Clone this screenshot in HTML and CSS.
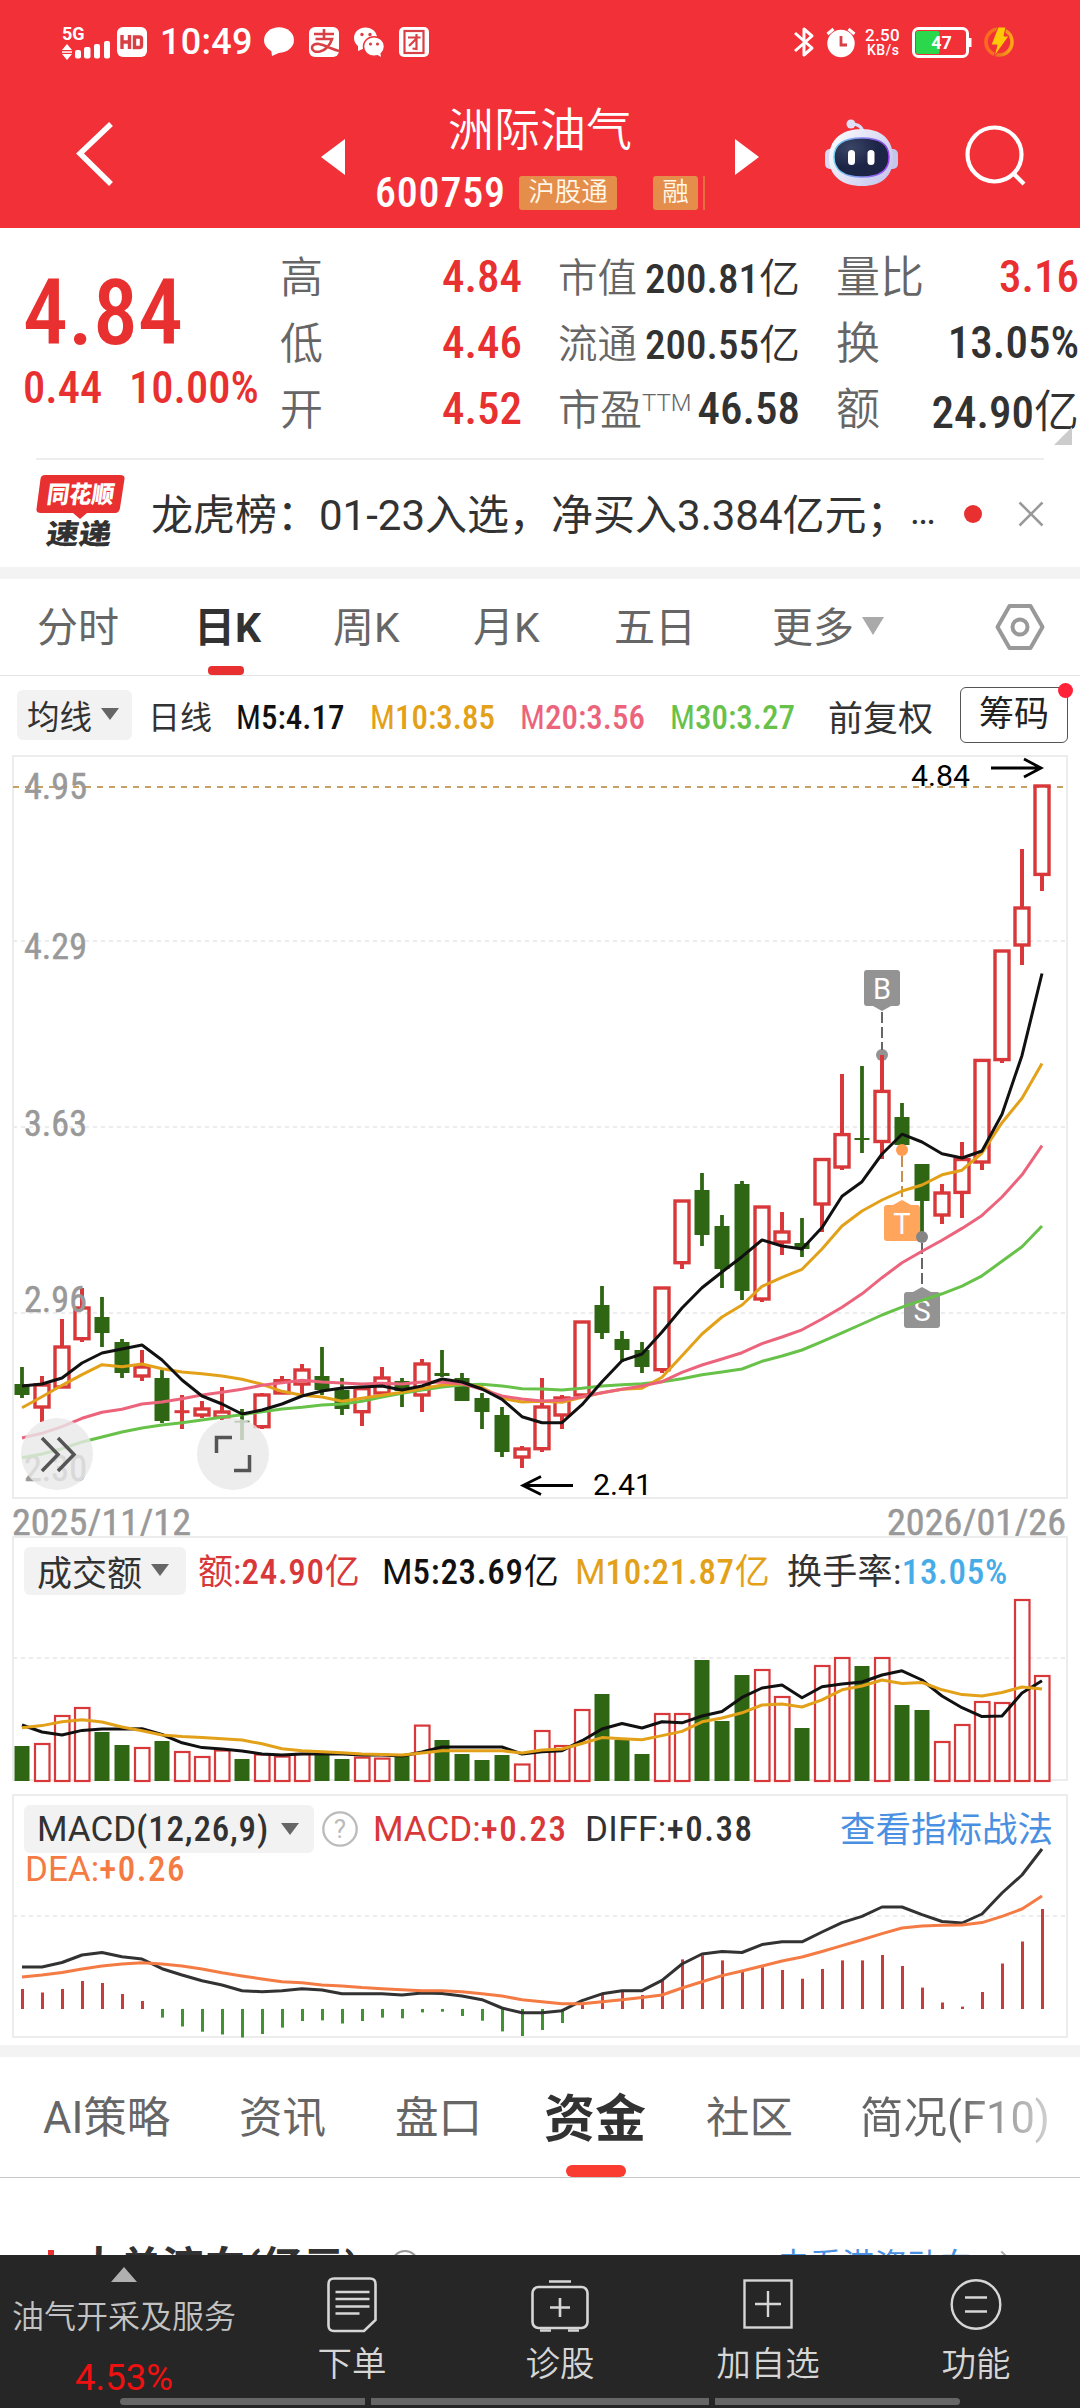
FILE: index.html
```html
<!DOCTYPE html>
<html lang="zh-CN">
<head>
<meta charset="utf-8">
<title>洲际油气 600759</title>
<link rel="stylesheet" href="styles.css">
</head>
<body>
<div class="app">
  <header class="top">
    <div class="status">
      <svg class="ic-signal" width="48" height="36" viewBox="0 0 48 36" fill="#fff">
        <text x="0" y="15" class="t5g">5G</text>
        <path d="M5 19l5 6H0zM5 35l5-6H0z"/><rect x="0" y="26.300" width="10" height="1.500"/>
        <rect x="13" y="25" width="6" height="8.500" rx="2"/><rect x="22" y="22" width="6.500" height="11.500" rx="2"/><rect x="32" y="19" width="6" height="14.500" rx="2"/><rect x="42" y="16" width="6" height="17.500" rx="2"/>
      </svg>
      <svg class="ic-hd" width="30" height="30" viewBox="0 0 30 30"><rect width="30" height="30" rx="6" fill="#fff"/><path d="M5 8v14M12.500 8v14M5 15h7.500M17.500 10h5a2 2 0 0 1 2 2v6.500a2 2 0 0 1-2 2h-5z" fill="none" stroke="#d94046" stroke-width="3.400"/></svg>
      <span class="clock">10:49</span>
      <svg class="ic-s" width="30" height="30" viewBox="0 0 30 30"><ellipse cx="15" cy="13" rx="15" ry="12.800" fill="#fff"/><path d="M7 22l1 7 9-4z" fill="#fff"/></svg>
      <svg class="ic-s" width="30" height="30" viewBox="0 0 30 30"><rect width="30" height="30" rx="6" fill="#fff"/><path d="M5 7h20M15 2v10M6.500 12h16.500c-2 6-6 11-12 12.500-5 1-8-1-8-3.500 0-3 3-4.500 7-4 6 1 12 5 20 7" fill="none" stroke="#d94046" stroke-width="2.600"/></svg>
      <svg class="ic-s" width="30" height="30" viewBox="0 0 30 30"><ellipse cx="11.500" cy="11" rx="11.500" ry="10.500" fill="#fff"/><path d="M4 18l0 6 7-3z" fill="#fff"/><ellipse cx="20" cy="19.500" rx="10.500" ry="9.800" fill="#fff" stroke="#f13038" stroke-width="1.500"/><path d="M22 27l5 3-1-6z" fill="#fff"/><g fill="#d94046"><circle cx="8" cy="7.500" r="1.700"/><circle cx="16" cy="7.500" r="1.700"/><circle cx="16.500" cy="17" r="1.600"/><circle cx="23.500" cy="17" r="1.600"/></g></svg>
      <svg class="ic-s" width="30" height="30" viewBox="0 0 30 30"><rect width="30" height="30" rx="5" fill="#fff"/><rect x="5.500" y="4" width="19" height="22" fill="none" stroke="#d94046" stroke-width="2.200"/><path d="M9 10.500h12.500M17.500 7v15l-4-.5M17 12l-7 7" fill="none" stroke="#d94046" stroke-width="2.200"/></svg>
      <svg class="ic-bt" width="20" height="30" viewBox="0 0 20 30"><path d="M1 6l17 15-8 7V2l8 7L1 24" fill="none" stroke="#fff" stroke-width="3" stroke-linejoin="round"/></svg>
      <svg class="ic-alarm" width="30" height="30" viewBox="0 0 30 30"><circle cx="15" cy="16.500" r="13.700" fill="#fff"/><path d="M1.500 7l6-5M28.500 7l-6-5" stroke="#fff" stroke-width="3"/><path d="M15 9v9h6" fill="none" stroke="#d94046" stroke-width="2.800"/></svg>
      <div class="speed"><b>2.50</b><i>KB/s</i></div>
      <svg class="ic-batt" width="60" height="31" viewBox="0 0 60 31"><rect x="1.500" y="1.500" width="54" height="28" rx="5" fill="none" stroke="#fff" stroke-width="3"/><rect x="4" y="4" width="23.500" height="23" rx="2" fill="#2bd84c"/><rect x="57" y="11" width="2.500" height="9" fill="#fff"/><text x="29.500" y="22" text-anchor="middle" class="tb">47</text></svg>
      <svg class="ic-bolt" width="30" height="30" viewBox="0 0 30 30"><defs><linearGradient id="ring" x1="0" x2="1"><stop offset="0" stop-color="#ff6a1e"/><stop offset=".5" stop-color="#e8781c"/><stop offset="1" stop-color="#ffa617"/></linearGradient></defs><circle cx="15" cy="15" r="13" fill="none" stroke="url(#ring)" stroke-width="3.600"/><path d="M14 0h8l-2 9h5L10 30l3-12H7z" fill="#ffca05" stroke="#f13038" stroke-width="1"/></svg>
    </div>
    <div class="nav">
      <svg class="n-back" width="40" height="66" viewBox="0 0 40 66"><path d="M37 3L6 32.500 37 63" fill="none" stroke="#fff" stroke-width="5.500"/></svg>
      <svg class="n-prev" width="24" height="36" viewBox="0 0 24 36"><path d="M24 0v36L0 18z" fill="#fff"/></svg>
      <div class="stock">
        <div class="name">洲际油气</div>
        <div class="code-row"><span class="code">600759</span><span class="tag">沪股通</span><span class="tag tag2">融</span><span class="sliver"></span></div>
      </div>
      <svg class="n-next" width="24" height="36" viewBox="0 0 24 36"><path d="M0 0v36l24-18z" fill="#fff"/></svg>
      <svg class="n-bot" width="74" height="70" viewBox="0 0 74 70">
        <defs><linearGradient id="shell" x1="0" x2="1" y1="0" y2=".6"><stop offset="0" stop-color="#fff"/><stop offset="1" stop-color="#c9caee"/></linearGradient><radialGradient id="visor" cx=".3" cy=".25"><stop offset="0" stop-color="#3a4566"/><stop offset="1" stop-color="#1d2547"/></radialGradient><linearGradient id="rim" x1="0" x2="1"><stop offset="0" stop-color="#6ed3f0"/><stop offset="1" stop-color="#9b40ee"/></linearGradient></defs>
        <path d="M26 5q12 0 12 10" fill="none" stroke="#dcdcf5" stroke-width="3"/><circle cx="26" cy="5" r="4.500" fill="#dfe0f7"/>
        <rect x="0" y="30" width="12" height="20" rx="5" fill="#d9d9f2"/><rect x="61" y="30" width="12" height="20" rx="5" fill="#c5c6ec"/>
        <path d="M37 10c20 0 31 11 31 29S57 67 37 67 4 57 4 39 16 10 37 10z" fill="url(#shell)"/>
        <path d="M37 19c18 0 27 6 27 19s-9 20-27 20S9 51 9 38s10-19 28-19z" fill="url(#visor)" stroke="url(#rim)" stroke-width="1.500"/>
        <rect x="23" y="31" width="7" height="15" rx="3.500" fill="#fff"/><rect x="42.500" y="31" width="7" height="15" rx="3.500" fill="#fff"/>
      </svg>
      <svg class="n-search" width="62" height="62" viewBox="0 0 62 62" fill="none" stroke="#fff" stroke-width="4.200"><circle cx="29.500" cy="29.500" r="27"/><path d="M48 48l11 11"/></svg>
    </div>
  </header>

  <section class="quote">
    <div class="price">
      <div class="last din">4.84</div>
      <div class="chg din"><span>0.44</span><span>10.00%</span></div>
    </div>
    <dl class="kv k1"><dt>高</dt><dd class="din up">4.84</dd><dt>低</dt><dd class="din up">4.46</dd><dt>开</dt><dd class="din up">4.52</dd></dl>
    <dl class="kv k2"><dt>市值</dt><dd class="din sm">200.81<em>亿</em></dd><dt>流通</dt><dd class="din sm">200.55<em>亿</em></dd><dt class="wide">市盈<sup>TTM</sup></dt><dd class="din">46.58</dd></dl>
    <dl class="kv k3"><dt>量比</dt><dd class="din up">3.16</dd><dt>换</dt><dd class="din">13.05%</dd><dt>额</dt><dd class="din">24.90<em>亿</em></dd></dl>
    <span class="corner"></span>
  </section>

  <section class="news">
    <svg class="logo" width="90" height="76" viewBox="0 0 90 76"><path d="M9 0h75q5 0 4.500 4L84 33q-.7 5-5 5H51l-7 6-7-6H5q-5 0-4.500-4L4.500 4Q5 0 9 0z" fill="#e83030"/><g transform="skewX(-8)"><text x="14" y="28.500" class="lg1" textLength="67" lengthAdjust="spacingAndGlyphs">同花顺</text><text x="19" y="69.500" class="lg2" textLength="65" lengthAdjust="spacingAndGlyphs">速递</text></g></svg>
    <span class="news-t">龙虎榜：01-23入选，净买入3.384亿元；</span><span class="ell">...</span>
    <span class="dot"></span>
    <svg width="26" height="26" viewBox="0 0 26 26" fill="none" stroke="#999" stroke-width="2.500"><path d="M1.500 1.500l23 23M24.500 1.500l-23 23"/></svg>
  </section>

  <nav class="period">
    <span>分时</span><span class="on">日K</span><span>周K</span><span>月K</span><span>五日</span><span class="more">更多<i class="tri big"></i></span>
    <svg width="50" height="46" viewBox="0 0 50 46" fill="none" stroke="#999" stroke-width="4"><path d="M14.500 2h21L47.500 23l-12 21h-21L2.500 23z" stroke-linejoin="round"/><circle cx="25" cy="23" r="7.500"/></svg>
  </nav>

  <div class="ma">
    <span class="chip">均线<i class="tri"></i></span><span class="day">日线</span>
    <span class="m m5"><u>M</u>5:4.17</span><span class="m m10"><u>M</u>10:3.85</span><span class="m m20"><u>M</u>20:3.56</span><span class="m m30"><u>M</u>30:3.27</span>
    <span class="fq">前复权</span><span class="cm">筹码</span>
  </div>

  <section class="kline panel"><svg id="kline" width="1080" height="781" viewBox="0 755 1080 781"></svg></section>

  <section class="panel vol">
    <svg id="volume" width="1080" height="258" viewBox="0 1536 1080 258"></svg>
    <div class="legend"><span class="chip">成交额<i class="tri"></i></span><span class="l v1">额:<b>24.90</b>亿</span><span class="l v2">M<b>5:23.69</b>亿</span><span class="l v3">M<b>10:21.87</b>亿</span><span class="l v4">换手率:<b class="blue">13.05%</b></span></div>
  </section>

  <section class="panel macd">
    <svg id="macd" width="1080" height="251" viewBox="0 1794 1080 251"></svg>
    <div class="legend-wrap">
      <div class="legend"><span class="chip">MACD<b>(12,26,9)</b><i class="tri"></i></span>
        <svg class="q" width="36" height="36" viewBox="0 0 36 36"><circle cx="18" cy="18" r="16.700" fill="none" stroke="#bbb" stroke-width="2.300"/><text x="18" y="27" text-anchor="middle" class="qm">?</text></svg>
        <span class="c1">MACD:<b>+0.23</b></span><span class="c2">DIFF:<b>+0.38</b></span><a class="how">查看指标战法</a></div>
      <div class="dea">DEA:<b>+0.26</b></div>
    </div>
  </section>

  <nav class="tabs"><span>AI策略</span><span>资讯</span><span>盘口</span><span class="on">资金</span><span>社区</span><span class="fade">简况(F10)</span></nav>
  <section class="flow"><i class="bar"></i><h2>大单流向(亿元)</h2><i class="ring"></i><a>去看港资动向</a><i class="chev"></i></section>

  <footer class="foot">
    <div class="items">
      <div class="sector"><i class="up-tri"></i><span>油气开采及服务</span><b>4.53%</b></div>
      <div class="act"><svg width="50" height="56" viewBox="0 0 50 56" fill="none" stroke="#d6d6d6" stroke-width="2.600"><path d="M7 1.500h36q5.500 0 5.500 5.500v36L37 54H7q-5.500 0-5.500-5.500V7Q1.500 1.500 7 1.500z"/><path d="M8.500 15h34M8.500 22h34M8.500 29.500h34M8.500 36.500h24"/></svg><span>下单</span></div>
      <div class="act"><svg width="58" height="56" viewBox="0 0 58 56" fill="none" stroke="#d6d6d6" stroke-width="2.600"><rect x="1.500" y="10" width="55" height="41" rx="6"/><path d="M18 4.500h22M29 21v19M19 30.500h20M9 53.500h11M37 53.500h11"/></svg><span>诊股</span></div>
      <div class="act"><svg width="50" height="56" viewBox="0 0 50 56" fill="none" stroke="#d6d6d6" stroke-width="2.400"><rect x="1.500" y="3.500" width="47" height="47"/><path d="M25 14v26M12 27h26"/></svg><span>加自选</span></div>
      <div class="act"><svg width="52" height="56" viewBox="0 0 52 56" fill="none" stroke="#d6d6d6" stroke-width="2.400"><circle cx="26" cy="27.500" r="24.300"/><path d="M15 20.500h22M15 34.500h22"/></svg><span>功能</span></div>
    </div>
    <div class="home"><i></i><i></i><i></i></div>
  </footer>
</div>
<script src="charts.js"></script>
</body>
</html>
```
FILE: styles.css
```css
* { box-sizing: border-box; }
body { margin: 0; background: #fff; font-family: Roboto, "Noto Sans CJK SC", sans-serif; color: #323232; }
i, em { font-style: normal; }
u { text-decoration: none; }
svg { display: block; flex: none; overflow: visible; }
span, a { white-space: nowrap; }
.app { width: 1080px; height: 2408px; overflow: hidden; display: flex; flex-direction: column; }
.app > * { flex: none; }
.din { font-family: "Roboto Condensed", Roboto, "Noto Sans CJK SC", sans-serif; font-weight: 500; }

.top { background: #f13038; height: 228px; color: #fff; }
.status { height: 84px; display: flex; align-items: flex-start; padding: 27px 0 0 62px; }
.ic-signal { margin: -2px 7px 0 0; }
.t5g { font: 700 18px Roboto; }
.clock { font: 500 36px/30px Roboto; width: 103px; padding-left: 13px; letter-spacing: .3px; }
.clock + .ic-s { margin-left: 14px; }
.ic-s { margin-right: 15px; }
.ic-bt { margin-left: 350px; }
.ic-alarm { margin-left: 12px; }
.speed { width: 56px; padding: 1px 0 0 9px; display: flex; flex-direction: column; gap: 1px; }
.speed b { font-weight: 500; font-size: 17px; line-height: 14px; letter-spacing: .3px; }
.speed i { font-weight: 500; font-size: 14px; line-height: 14px; padding-left: 2px; letter-spacing: .5px; }
.ic-batt { margin: 0; }
.tb { font: 700 18px Roboto; fill: #fff; }
.ic-bolt { margin-left: 12px; }
.nav { height: 144px; display: flex; align-items: flex-start; }
.n-back { margin: 37px 0 0 74px; }
.n-prev { margin: 55px 0 0 207px; }
.stock { width: 390px; padding: 18px 0 0 30px; }
.name { width: 330px; text-align: center; font-size: 46px; line-height: 56px; font-weight: 350; }
.code-row { display: flex; align-items: center; margin-top: 16px; height: 38px; }
.code { font: 500 42px/38px "Roboto Condensed", Roboto; width: 144px; letter-spacing: .8px; }
.tag { background: #e58e4c; color: #fff7e8; width: 98px; height: 34px; border-radius: 3px; font-size: 26.500px; line-height: 32px; text-align: center; font-weight: 350; }
.tag2 { width: 45px; margin-left: 36px; }
.sliver { width: 2px; height: 34px; background: #e5713f; margin-left: 5px; }
.n-next { margin: 55px 0 0 0; }
.n-bot { margin: 35px 0 0 66px; }
.n-search { margin: 41px 0 0 66px; }

.quote { height: 230px; display: flex; position: relative; }
.price { width: 280px; padding-left: 23px; color: #e83030; }
.last { font-size: 90px; line-height: 80px; margin-top: 46px; }
.chg { display: flex; font-size: 44.500px; line-height: 50px; margin-top: 9px; }
.chg span:first-child { width: 106px; }
.kv { margin: 15px 0 0; display: grid; grid-template-columns: 80px 1fr; grid-auto-rows: 66px; align-items: center; color: #666; }
.kv dt { font-size: 43px; font-weight: 350; white-space: nowrap; padding-bottom: 4px; }
.kv dd { margin: 0; text-align: right; font-size: 45px; color: #323232; white-space: nowrap; }
.kv dd.up { color: #e83030; }
.kv dd.sm { font-size: 41px; padding-bottom: 2px; }
.kv em { font-weight: 350; }
.k1 { width: 242px; }
.k2 { width: 242px; margin-left: 36px; }
.k2 dt { font-size: 39.500px; }
.k2 dt.wide { font-size: 42px; }
.k2 sup { font-size: 24px; line-height: 0; vertical-align: 14px; }
.k3 { width: 243px; margin-left: 36px; }
.k3 dt { font-size: 44px; }
.corner { position: absolute; left: 1054px; top: 199px; border-left: 18px solid transparent; border-bottom: 18px solid #ccc; }

.news { height: 109px; margin: 0 36px; border-top: 2px solid #ededed; display: flex; align-items: center; }
.logo { margin-top: -1px; }
.lg1 { font: 900 24px "Noto Sans CJK SC"; fill: #fff; }
.lg2 { font: 900 28px "Noto Sans CJK SC"; fill: #323232; }
.news-t { font-size: 42px; margin-left: 25px; width: 761px; padding-bottom: 5px; }
.ell { font-size: 38px; width: 28px; letter-spacing: -2px; padding-bottom: 5px; }
.dot { width: 18px; height: 18px; border-radius: 9px; background: #e83030; margin-left: 26px; }
.news > .dot + svg { margin-left: 36px; }

.period { height: 109px; border-top: 12px solid #f3f3f3; border-bottom: 1px solid #e4e4e4; display: flex; align-items: center; padding-left: 37px; font-size: 41px; color: #666; font-weight: 400; }
.period span { padding-bottom: 6px; }
.period span:nth-child(1) { width: 157px; }
.period span:nth-child(2) { width: 139px; }
.period span:nth-child(3) { width: 140px; }
.period span:nth-child(4) { width: 141px; }
.period span:nth-child(5) { width: 158px; }
.period .on { font-weight: 700; color: #323232; align-self: stretch; display: flex; align-items: center; position: relative; }
.period .on::after { content: ""; position: absolute; left: 14px; bottom: 0; width: 36px; height: 9px; border-radius: 4px; background: #e83030; }
.more { display: flex; align-items: center; width: 223px; }
.tri { display: inline-block; border: 9px solid transparent; border-top: 12px solid #666; border-bottom: 0; }
.tri.big { border-width: 18px 11px 0; border-top-color: #aaa; margin: 4px 0 0 8px; }

.ma { height: 79px; display: flex; align-items: center; padding: 0 0 1px 17px; font-size: 33px; }
.chip { background: #f2f2f2; border-radius: 6px; display: flex; align-items: center; color: #323232; }
.ma .chip { width: 115px; height: 50px; padding: 0 0 2px 10px; font-size: 32.500px; gap: 9px; }
.day { margin-left: 16px; width: 88px; font-size: 32px; }
.m { font: 500 33px "Roboto Condensed", Roboto; padding-top: 4px; }
.m u { font-weight: 400; }
.m5 { width: 134px; color: #111; }
.m10 { width: 150px; color: #e3a11a; }
.m20 { width: 150px; color: #ec647c; }
.m30 { width: 158px; color: #68c24a; }
.fq { width: 132px; font-size: 35px; }
.cm { width: 108px; height: 56px; border: 1.500px solid #555; border-radius: 6px; text-align: center; font-size: 35px; line-height: 54px; position: relative; color: #222; }
.cm::after { content: ""; position: absolute; right: -6px; top: -5px; width: 15px; height: 15px; border-radius: 8px; background: #ff2238; }

.panel { display: grid; }
.panel > * { grid-area: 1 / 1; }
.kline { height: 781px; }
.vol { height: 258px; }
.macd { height: 251px; }
.legend { display: flex; align-items: center; height: 48px; margin: 11px 0 0 24px; font-size: 35px; }
.legend b, .dea b { font-family: "Roboto Condensed", Roboto; font-weight: 500; letter-spacing: .7px; }
.legend .chip { height: 48px; padding: 0 0 2px 13px; gap: 9px; width: 162px; }
.l { padding-bottom: 5px; }
.v1 { margin-left: 12px; width: 184px; color: #d9383a; }
.v2 { width: 193px; color: #111; }
.v3 { width: 212px; color: #e3a11a; }
.v4 { letter-spacing: .3px; }
.blue { color: #46ace8; }
.macd .chip { width: 290px; gap: 0; padding-bottom: 0; }
.macd .chip .tri { margin-left: 12px; }
.macd .chip b { letter-spacing: .8px; }
.q { margin: 0 15px 0 8px; }
.qm { font: 400 26px Roboto; fill: #bbb; }
.c1 { width: 212px; color: #d9383a; }
.c2 { width: 255px; }
.c1 b, .c2 b, .dea b { letter-spacing: 1.500px; }
.c2 { letter-spacing: .4px; }
.how { color: #4a90e2; font-size: 35.500px; padding-bottom: 6px; }
.dea { margin-left: 25px; font-size: 35px; line-height: 34px; color: #f47b43; }

.tabs { height: 133px; border-top: 12px solid #f3f3f3; border-bottom: 1.500px solid #c8c8c8; display: flex; align-items: center; padding-left: 43px; font-size: 43.500px; color: #666; font-weight: 400; }
.tabs span { padding-bottom: 5px; }
.tabs span:nth-child(1) { width: 196px; }
.tabs span:nth-child(2) { width: 156px; }
.tabs span:nth-child(3) { width: 149px; }
.tabs span:nth-child(4) { width: 162px; }
.tabs span:nth-child(5) { width: 154px; }
.tabs .on { font-weight: 700; font-size: 51px; color: #323232; position: relative; align-self: stretch; display: flex; align-items: center; }
.tabs .on::after { content: ""; position: absolute; left: 22px; bottom: 0; width: 60px; height: 12px; border-radius: 6px; background: #fa3b30; }
.fade { background: linear-gradient(90deg, #666 50%, #d8d8d8); background-clip: text; color: transparent; width: 195px; }

.flow { height: 77px; display: flex; padding: 69px 0 0 48px; overflow: hidden; align-items: flex-start; }
.flow > * { flex: none; }
.bar { width: 6px; height: 36px; background: #e83030; margin-top: 3px; }
.flow h2 { margin: -2px 0 0 24px; font-size: 42px; line-height: 46px; width: 313px; }
.flow .ring { width: 28px; height: 28px; border: 2.500px solid #999; border-radius: 50%; margin-top: 3px; }
.flow a { color: #4a90e2; font-size: 32.500px; line-height: 38px; margin-left: 358px; }
.chev { width: 16px; height: 16px; border: solid #aaa; border-width: 2.500px 2.500px 0 0; transform: rotate(45deg); margin: 7px 0 0 22px; }

.foot { height: 153px; background: #262626; color: #d6d6d6; }
.items { display: flex; height: 143px; }
.sector { width: 248px; display: flex; flex-direction: column; align-items: center; color: #c3c3c3; font-size: 32px; font-weight: 350; }
.up-tri { margin-top: 12px; border: 13px solid transparent; border-top: 0; border-bottom: 15px solid #b0b0b0; }
.sector span { line-height: 40px; margin-top: 15px; }
.sector b { font-weight: 400; font-size: 36.500px; line-height: 40px; margin-top: 21px; color: #ee1111; }
.act { width: 208px; display: flex; flex-direction: column; align-items: center; padding-top: 22px; font-size: 34.500px; line-height: 42px; font-weight: 350; }
.act span { margin-top: 10px; }
.home { display: grid; grid-template-columns: 245px 338px 245px; gap: 6px; margin: 0 0 0 120px; height: 7px; }
.home i { background: #666; }
.home i:first-child { border-radius: 4px 0 0 4px; }
.home i:last-child { border-radius: 0 4px 4px 0; }

.axis { font: 400 37px "Roboto Condensed", Roboto; fill: #999; stroke: #999; stroke-width: .5px; }
.mark { font: 400 30px Roboto; fill: #000; }
.flag { font: 400 29px Roboto; fill: #fff; text-anchor: middle; }
```
FILE: charts.js
```javascript
const x = i => 22 + 20 * i;
const RED = '#d9383a', GREEN = '#2f6613', GRID = '#ececec';

// [colour, high, body top, body bottom, low]
const candles = [
['g',1367,1384,1395,1398],['r',1376,1385,1407,1422],['r',1319,1347,1387,1388],['r',1288,1308,1338.7,1342],['g',1297,1317,1333,1347],
['g',1339,1342,1373,1378],['r',1350,1367,1376,1381],['g',1370,1378,1421,1423],['r',1395,1411.7,1411.7,1429],['r',1401,1409,1415,1418],
['r',1387,1412,1417,1420],['g',1409,1421.7,1421.7,1440],['r',1393,1395,1426.7,1429],['r',1376,1380.7,1393,1393],['r',1364,1370,1384,1394],
['g',1347,1376,1390,1395],['g',1378,1390,1409,1415],['r',1387,1388.7,1411.7,1426],['r',1367,1378,1393,1394],['g',1378,1381,1391,1407],
['r',1359,1364,1395,1412],['g',1350,1373,1376,1377],['g',1373,1378,1401,1401],['g',1393,1398,1412,1429],['g',1407,1415,1452,1457],
['r',1446,1449,1457,1468],['r',1378,1407,1448.7,1452],['r',1395,1398,1415,1429],['r',1322,1322,1395,1395],['g',1286,1305,1333,1339],
['g',1331,1339,1350,1362],['g',1342,1350,1367,1373],['r',1288,1288,1369.7,1373],['r',1201,1201,1262.7,1269],['g',1173,1190,1235,1246],
['g',1215,1226,1269,1288],['g',1181,1184,1291,1300],['r',1207,1207,1299,1302],['r',1212,1232,1242,1255],['g',1218,1243,1249,1257],
['r',1159.5,1159.5,1204,1232],['r',1074,1134.6,1167,1170],['g',1066,1139,1139,1153],['r',1055,1091.4,1141.5,1159],['g',1103,1117,1145,1150],
['g',1164,1164,1201,1237],['r',1184,1193,1215,1224],['r',1142,1159.5,1192.4,1218],['r',1060.4,1060.4,1162,1170],['r',951,951,1059.6,1063],
['r',849,908,945,965],['r',786,786,874.4,891]];

const ma = {
'#68c24a':[1457.7,1454,1448.7,1442,1437,1432,1428,1425,1422.7,1420,1417.3,1414.7,1411.7,1409,1407.3,1405,1404,1401.3,1397,1393.3,1390,1387,1385,1384.3,1386,1388.7,1389,1390,1388.3,1386,1384.7,1383.7,1381.7,1378.7,1374.7,1372,1369,1361.3,1356,1350,1341.6,1332.8,1324,1315,1307.2,1300.3,1293.8,1286.2,1275.8,1261.3,1246.7,1226],
'#e3a11a':[1407.7,1396.7,1385.3,1374.7,1364.7,1366.7,1364,1368.7,1372,1373.7,1376,1379.3,1384.3,1391.3,1395.3,1397,1401.3,1398.3,1395.3,1392.3,1388.7,1385,1383.7,1387.3,1398.3,1402,1401.3,1402.3,1397.3,1392.7,1389.3,1388.3,1377.3,1355.7,1334,1317,1305,1286.3,1277.4,1269.3,1249,1226,1211,1200,1191,1185,1174.8,1170.2,1153,1122.7,1098.3,1063.4],
'#ec647c':[1438,1433.3,1426.7,1418.3,1412.3,1409.3,1404,1402,1398.7,1395,1392.3,1389.3,1385.3,1382.7,1380.3,1382,1383,1384,1383.3,1384,1382,1382.3,1383.7,1389.3,1396,1399,1401,1400.3,1396.7,1392.7,1389.3,1386,1381.7,1372.3,1365,1359,1352.7,1343.7,1337,1329.8,1319,1307.2,1293.8,1277.7,1262.8,1251.3,1240.2,1228.4,1215.4,1197,1174.8,1145.7],
'#111':[1386,1384,1378,1363,1353,1349,1345,1360,1380,1396,1404,1414,1410,1404,1396,1391,1388,1387,1386,1390,1386,1379,1382,1389,1399.3,1416.7,1422.7,1422.7,1404.7,1381.7,1360.7,1354,1332,1308,1287.7,1272,1256.7,1240,1246,1249,1227.6,1196.2,1181.7,1154,1134.2,1142,1153.7,1158,1151,1114.3,1055.4,973.5]};

const volume = [1746,1744,1716,1708,1732,1745,1748,1741,1752,1757,1750.5,1759,1754.5,1756.6,1754,1754,1759,1757.6,1758.6,1755.5,1725.6,1740,1754,1760,1755,1764.5,1731,1746,1710,1694,1740,1754,1714,1714,1660,1721,1675,1670,1697,1728,1666,1658,1666,1658,1705,1710,1742,1725,1702,1703,1600,1676];
const volMa = {
'#111':[1725,1732,1735,1730.4,1729,1729,1728.7,1734.5,1742.8,1747.6,1749,1751,1754,1755,1754,1754,1754,1755,1755,1756,1752,1747,1747,1747,1747,1754,1751.8,1750.7,1740.7,1729,1723.5,1728,1721.8,1722.8,1716,1711.5,1697.4,1688,1685,1697.7,1686.7,1684,1682,1675,1670.8,1680,1696,1707.7,1716.6,1716,1693,1680.8],
'#e3a11a':[1727.7,1725.6,1721.8,1719.7,1722,1727,1730.8,1735,1736.6,1737.6,1738.7,1740,1743.8,1748.7,1750.7,1751.8,1752.8,1754,1754.5,1755,1753,1750.7,1750.7,1750.7,1750.7,1753,1750,1749,1743.5,1737.6,1738.7,1739.7,1735.6,1731.4,1721.8,1718,1712.8,1705,1704,1707,1699.8,1689.8,1686,1680,1683.6,1682.5,1689.8,1694.6,1696,1692.5,1687,1689]};

const hist = [1989,1992.5,1989,1981,1983,1994,2001,2017.6,2026.5,2031.7,2034.5,2037.5,2034,2027.6,2021,2020.4,2023.5,2021,2017.6,2018.3,2012.4,2011.7,2016,2020.7,2031.4,2036,2030,2023,2004.5,1994,1991.4,1995,1981,1959.4,1955.3,1960.4,1972,1967.3,1970,1978.7,1969,1960.4,1960.4,1955,1966,1987.6,2002.5,2006.6,1992,1963.5,1941.5,1909];
const macdLines = {
'#323232':[1967,1967,1962.5,1955,1952.5,1956.7,1959,1968.7,1975,1980.8,1985,1990.7,1991.8,1990.7,1988.7,1990,1993.8,1993.8,1993.8,1995,1993,1993.5,1996,1999.7,2008,2012.8,2012.8,2010.7,2000.7,1993.8,1990.7,1990.7,1980.4,1964,1954,1951.5,1952.5,1944.6,1941.8,1941.8,1932,1922.6,1916.4,1907,1907,1914.6,1921.5,1923,1914,1893,1875,1849],
'#f47b43':[1977,1975,1972.5,1969,1966,1964,1962.8,1964,1966,1969,1972.8,1976,1979,1981.8,1982.8,1985,1986,1987.6,1988.7,1989.7,1990.7,1990.7,1991.8,1993.8,1996,1999.7,2001.8,2003.8,2003.8,2001.8,1999.7,1997.6,1995,1988,1981.8,1975.6,1971,1966,1961,1957,1951.5,1945.6,1939.8,1933.6,1928,1926,1925.3,1925,1922.6,1916.4,1909,1896]};

const path = (d, c, w, extra = '') => `<path d="${d}" fill="none" stroke="${c}" stroke-width="${w}" ${extra}/>`;
const lines = set => Object.entries(set).map(([c, ys]) => path('M' + ys.map((y, i) => x(i) + ' ' + y).join('L'), c, 3, 'stroke-linejoin="round"')).join('');
const frame = (top, bottom) => `<rect x="13" y="${top}" width="1054" height="${bottom - top}" fill="none" stroke="${GRID}" stroke-width="2"/>`;
const dash = y => path(`M13 ${y}H1066`, GRID, 2, 'stroke-dasharray="4 4"');
const text = (cls, tx, ty, w, s) => `<text class="${cls}" x="${tx}" y="${ty}" textLength="${w}" lengthAdjust="spacingAndGlyphs">${s}</text>`;

const candle = ([c, h, t, b, l], i) => {
  const cx = x(i);
  if (c === 'g') return path(`M${cx} ${h}V${l}`, GREEN, 3.8) + `<rect x="${cx - 7.5}" y="${t - (t === b ? 1 : 0)}" width="15" height="${Math.max(b - t, 2)}" fill="${GREEN}"/>`;
  const body = t === b ? path(`M${cx - 7.5} ${t}h15`, RED, 3) : `<rect x="${cx - 7}" y="${t}" width="14" height="${b - t}" fill="none" stroke="${RED}" stroke-width="3.400"/>`;
  return path(`M${cx} ${h}V${t}M${cx} ${b}V${l}`, RED, 4) + body;
};

const flag = (cx, top, letter, colour, below) => {
  const tip = below ? `M${cx - 9} ${top}l9 -5 9 5z` : `M${cx - 9} ${top + 36}l9 5 9-5z`;
  return `<rect x="${cx - 18}" y="${top}" width="36" height="36" rx="3" fill="${colour}"/><path d="${tip}" fill="${colour}"/><text class="flag" x="${cx}" y="${top + 29}">${letter}</text>`;
};
const dotAt = (cx, cy, c) => `<circle cx="${cx}" cy="${cy}" r="6" fill="${c}"/>`;
const stem = (cx, y1, y2, c) => path(`M${cx} ${y1}V${y2}`, c, 2, 'stroke-dasharray="11 4"');

document.getElementById('kline').innerHTML =
  frame(756, 1498) + path('M13 787H1066', '#c9a064', 1.8, 'stroke-dasharray="6 6"') + [941, 1127, 1313].map(dash).join('') +
  dotAt(882, 1055, '#939393') + candles.map(candle).join('') +
  text('axis', 24, 799, 63, '4.95') + text('axis', 24, 958.5, 63, '4.29') + text('axis', 24, 1136, 63, '3.63') + text('axis', 24, 1312, 63, '2.96') + text('axis', 24, 1481, 63, '2.30') +
  flag(882, 970, 'B', '#939393') + stem(882, 1012, 1050, '#666') +
  flag(902, 1205, 'T', '#ffa55c', true) + dotAt(902, 1150, '#ff9c50') + stem(902, 1156, 1201, '#c98f4e') +
  flag(922, 1292, 'S', '#939393', true) + dotAt(922, 1237, '#858585') + stem(922, 1243, 1288, '#666') + lines(ma) +
  text('mark', 911, 786, 59, '4.84') + path('M991 768H1040M1024 759l17 9-17 9', '#000', 2.8) +
  text('mark', 593, 1495, 59, '2.41') + path('M573 1485.500H525M541 1476.500l-18 9 18 9', '#000', 2.8) +
  '<circle cx="57" cy="1454" r="36" fill="#e8e8e8" fill-opacity=".8"/><circle cx="233" cy="1454" r="36" fill="#e8e8e8" fill-opacity=".8"/>' +
  path('M42 1438l16 16.500-16 16.500M58 1438l16 16.500-16 16.500M232 1437.500H216.500V1453M234 1470.500H249.500V1455', '#555', 3.5) +
  text('axis', 12, 1535, 179, '2025/11/12') + text('axis', 887, 1535, 179, '2026/01/26');

document.getElementById('volume').innerHTML =
  frame(1537, 1780) + dash(1658) +
  volume.map((y, i) => candles[i][0] === 'g'
    ? `<rect x="${x(i) - 7.5}" y="${y}" width="15" height="${1781 - y}" fill="${GREEN}"/>`
    : `<rect x="${x(i) - 7}" y="${y}" width="14.500" height="${1781 - y}" fill="#fff" stroke="${RED}" stroke-width="2.200"/>`).join('') + lines(volMa);

document.getElementById('macd').innerHTML =
  frame(1795, 2037) + dash(1916) +
  hist.map((y, i) => path(`M${x(i) + .5} 2009V${y}`, y > 2009 ? '#3f9430' : '#c83c3c', 3)).join('') + lines(macdLines);
```
